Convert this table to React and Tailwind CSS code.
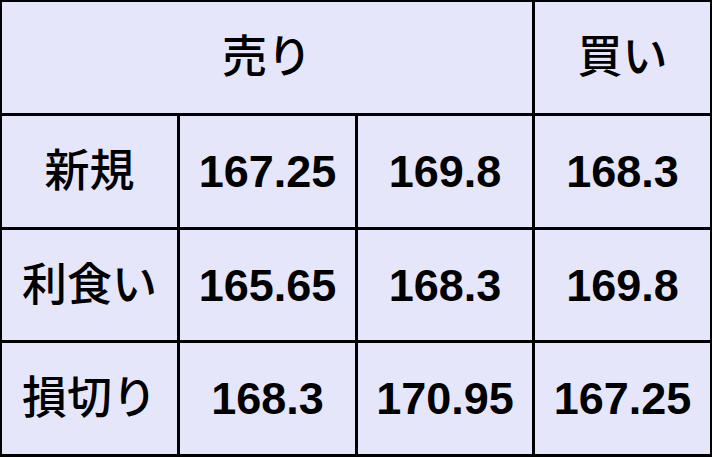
import React from "react";

const rows = [
  ["新規", "167.25", "169.8", "168.3"],
  ["利食い", "165.65", "168.3", "169.8"],
  ["損切り", "168.3", "170.95", "167.25"],
];

const cell = "bg-[#e6e6fa] flex items-center justify-center";
// Japanese labels look a bit lighter than the numbers
const label = `${cell} font-medium`;

const App = () => {
  return (
    <div
      className="w-[712px] h-[457px] bg-black pt-[2px] pl-[2px] pr-[2px] pb-[3px] grid grid-cols-[175px_175px_174px_175px] grid-rows-[111px_111px_110px_111px] gap-[3px] text-[45px] font-bold text-black leading-none"
      style={{ fontFamily: '"Liberation Sans", "Noto Sans CJK JP", sans-serif' }}
    >
      <div className={`${label} col-span-3`}>売り</div>
      <div className={label}>買い</div>
      {rows.map((r) =>
        r.map((v, i) => (
          <div key={r[0] + i} className={i === 0 ? label : cell}>
            {v}
          </div>
        ))
      )}
    </div>
  );
};

export default App;
